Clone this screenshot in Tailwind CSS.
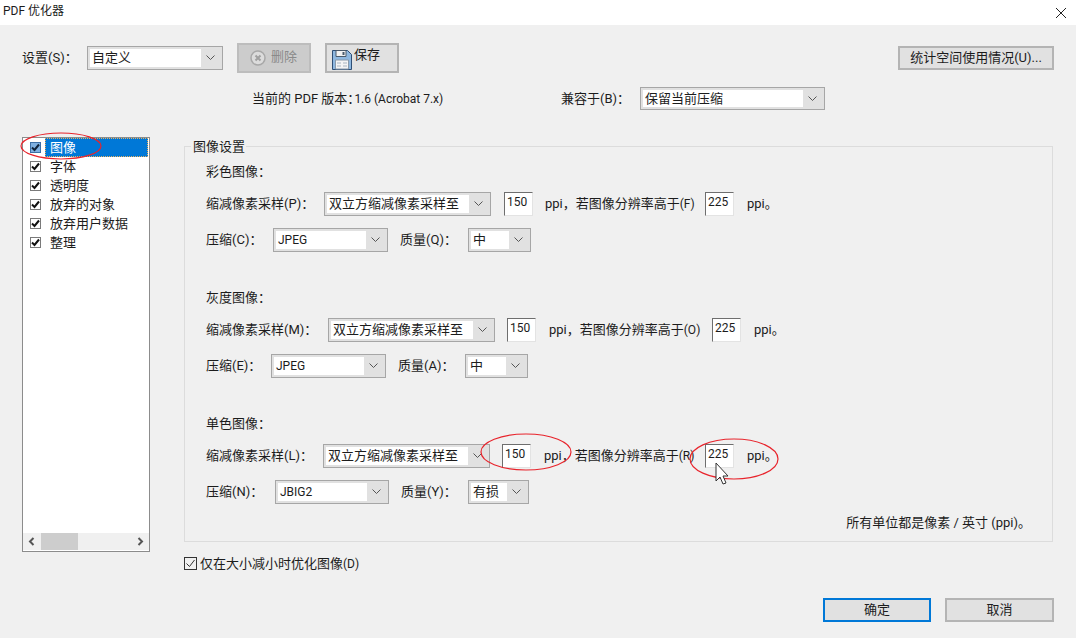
<!DOCTYPE html>
<html>
<head>
<meta charset="UTF-8" />
<title>PDF 优化器</title>
<script src="https://cdn.jsdelivr.net/npm/@tailwindcss/browser@4"></script>
</head>
<body class="relative h-[638px] w-[1076px] overflow-hidden bg-[#f0f0f0] font-['Roboto','Noto_Sans_CJK_SC',sans-serif] text-[13px] leading-5 text-[#1c1c1c]">

<!-- title bar -->
<div class="flex h-[25px] items-center justify-between bg-white pl-[3px] pr-[9px]">
  <span class="-mt-[3px] text-[12px]">PDF 优化器</span>
  <svg width="12" height="12" viewBox="0 0 12 12" fill="none" stroke="#222" stroke-width="1"><path d="M1 1l10 10M11 1L1 11"/></svg>
</div>

<!-- settings row -->
<div class="mt-[18px] flex h-[30px] items-center pl-[22px] pr-[22px]">
  <span class="w-[65px]">设置(S)：</span>
  <div class="flex h-[24px] w-[136px] items-center border border-[#a6a6a6] bg-[#e1e1e1] p-[2px]">
    <div class="h-full flex-1 bg-white pl-[2px] leading-[18px]">自定义</div>
    <svg class="mx-[5px]" width="9" height="6" viewBox="0 0 9 6" fill="none" stroke="#555"><path d="M.5 .5l4 4 4-4"/></svg>
  </div>
  <button class="ml-[14px] flex h-[30px] w-[74px] items-center border-2 border-[#bdbdbd] bg-[#cccccc] pl-[11px] text-[#8a8a8a]">
    <svg width="16" height="16" viewBox="0 0 16 16"><circle cx="8" cy="8" r="7" fill="#dcdcdc" stroke="#a8a8a8" stroke-width="1.5"/><path d="M5.5 5.5l5 5M10.5 5.5l-5 5" stroke="#a0a0a0" stroke-width="2"/></svg>
    <span class="ml-[5px] -mt-[2px]">删除</span>
  </button>
  <button class="ml-[14px] flex h-[30px] w-[74px] items-start border-2 border-[#b4b4b4] bg-[#e1e1e1] pl-[5px]">
    <svg class="mt-[4px]" width="20" height="21" viewBox="0 0 20 21"><path d="M.5 1.5h15l4 4v15H.5z" fill="#8fb8e0" stroke="#2f4f75"/><path d="M4 1.5h10v6H4z" fill="#f2f2f2" stroke="#4a5a6a"/><path d="M10.5 3h2v3h-2z" fill="#4a5a6a"/><path d="M3.5 11h13v9h-13z" fill="#f4f4f4" stroke="#8a9aaa"/><path d="M5 14h4M11 14h4M5 17h4M11 17h4" stroke="#a8b4c0"/></svg>
    <span class="ml-[2px]">保存</span>
  </button>
  <button class="ml-auto h-[24px] w-[156px] border-2 border-[#b4b4b4] bg-[#e1e1e1] leading-[20px]">统计空间使用情况(U)...</button>
</div>

<!-- version row -->
<div class="mt-[14px] flex h-[23px] items-center pl-[252px]">
  <span class="w-[309px]">当前的 PDF 版本：<span class="-ml-[6px] text-[12px]">1.6 (Acrobat 7.x)</span></span>
  <span class="w-[79px]">兼容于(B)：</span>
  <div class="flex h-[23px] w-[185px] items-center border border-[#a6a6a6] bg-[#e1e1e1] p-[2px]">
    <div class="h-full flex-1 bg-white pl-[2px] leading-[17px]">保留当前压缩</div>
    <svg class="mx-[5px]" width="9" height="6" viewBox="0 0 9 6" fill="none" stroke="#555"><path d="M.5 .5l4 4 4-4"/></svg>
  </div>
</div>

<!-- body -->
<div class="mt-[27px] flex items-start pl-[22px]">
  <!-- panel list -->
  <div class="flex h-[415px] w-[128px] flex-col border border-[#8c8c8c] bg-white">
    <div class="flex-1">
      <div class="flex h-[19px] items-center pl-[7px]">
        <span class="flex h-[11px] w-[11px] items-center justify-center border border-[#3d6fa5] bg-[#7fb0e0]"><svg width="9" height="9" viewBox="0 0 9 9" fill="none" stroke="#10233a" stroke-width="2"><path d="M1 4.5l2.5 2.5L8 1.5"/></svg></span>
        <span class="ml-[4px] flex h-[19px] w-[103px] items-center border border-dotted border-[#e8b060] bg-[#0078d7] pl-[4px] text-white">图像</span>
      </div>
      <div class="flex h-[19px] items-center pl-[7px]">
        <span class="flex h-[11px] w-[11px] items-center justify-center border border-[#7a7a7a] bg-white"><svg width="9" height="9" viewBox="0 0 9 9" fill="none" stroke="#111" stroke-width="2"><path d="M1 4.5l2.5 2.5L8 1.5"/></svg></span>
        <span class="ml-[9px]">字体</span>
      </div>
      <div class="flex h-[19px] items-center pl-[7px]">
        <span class="flex h-[11px] w-[11px] items-center justify-center border border-[#7a7a7a] bg-white"><svg width="9" height="9" viewBox="0 0 9 9" fill="none" stroke="#111" stroke-width="2"><path d="M1 4.5l2.5 2.5L8 1.5"/></svg></span>
        <span class="ml-[9px]">透明度</span>
      </div>
      <div class="flex h-[19px] items-center pl-[7px]">
        <span class="flex h-[11px] w-[11px] items-center justify-center border border-[#7a7a7a] bg-white"><svg width="9" height="9" viewBox="0 0 9 9" fill="none" stroke="#111" stroke-width="2"><path d="M1 4.5l2.5 2.5L8 1.5"/></svg></span>
        <span class="ml-[9px]">放弃的对象</span>
      </div>
      <div class="flex h-[19px] items-center pl-[7px]">
        <span class="flex h-[11px] w-[11px] items-center justify-center border border-[#7a7a7a] bg-white"><svg width="9" height="9" viewBox="0 0 9 9" fill="none" stroke="#111" stroke-width="2"><path d="M1 4.5l2.5 2.5L8 1.5"/></svg></span>
        <span class="ml-[9px]">放弃用户数据</span>
      </div>
      <div class="flex h-[19px] items-center pl-[7px]">
        <span class="flex h-[11px] w-[11px] items-center justify-center border border-[#7a7a7a] bg-white"><svg width="9" height="9" viewBox="0 0 9 9" fill="none" stroke="#111" stroke-width="2"><path d="M1 4.5l2.5 2.5L8 1.5"/></svg></span>
        <span class="ml-[9px]">整理</span>
      </div>
    </div>
    <!-- scrollbar -->
    <div class="mb-[1px] flex h-[17px] items-center bg-[#f0f0f0]">
      <svg class="ml-[5px]" width="7" height="9" viewBox="0 0 7 9" fill="none" stroke="#555" stroke-width="2"><path d="M5.5 1L2 4.5 5.5 8"/></svg>
      <div class="ml-[6px] h-full w-[37px] bg-[#cdcdcd]"></div>
      <svg class="ml-auto mr-[5px]" width="7" height="9" viewBox="0 0 7 9" fill="none" stroke="#555" stroke-width="2"><path d="M1.5 1L5 4.5 1.5 8"/></svg>
    </div>
  </div>

  <!-- right column -->
  <div class="ml-[34px] mt-[9px]">
    <div class="relative h-[396px] w-[869px] border border-[#dcdcdc] pl-[21px] pt-[15px]">
      <span class="absolute -top-[10px] left-[6px] bg-[#f0f0f0] pl-[2px] pr-[1px]">图像设置</span>

      <!-- colour -->
      <div class="h-5">彩色图像：</div>
      <div class="mt-[10px] flex h-[24px] items-center">
        <span class="w-[118px]">缩减像素采样(P)：</span>
        <div class="flex h-[24px] w-[167px] items-center border border-[#a6a6a6] bg-[#e1e1e1] p-[2px]"><div class="h-full flex-1 bg-white pl-[2px] leading-[18px]">双立方缩减像素采样至</div><svg class="mx-[5px]" width="9" height="6" viewBox="0 0 9 6" fill="none" stroke="#555"><path d="M.5 .5l4 4 4-4"/></svg></div>
        <div class="ml-[13px] h-[24px] w-[29px] border border-b-[#e3e3e3] border-l-[#6e6e6e] border-r-[#e3e3e3] border-t-[#6e6e6e] bg-white pl-[2px] text-[12px] leading-[19px]">150</div>
        <span class="ml-[12px] w-[160px]">ppi，若图像分辨率高于<span class="text-[12px]">(F)</span></span>
        <div class="h-[24px] w-[29px] border border-b-[#e3e3e3] border-l-[#6e6e6e] border-r-[#e3e3e3] border-t-[#6e6e6e] bg-white pl-[2px] text-[12px] leading-[19px]">225</div>
        <span class="ml-[13px]">ppi。</span>
      </div>
      <div class="mt-[12px] flex h-[24px] items-center">
        <span class="w-[67px]">压缩(C)：</span>
        <div class="flex h-[24px] w-[115px] items-center border border-[#a6a6a6] bg-[#e1e1e1] p-[2px]"><div class="h-full flex-1 bg-white pl-[2px] text-[12px] leading-[18px]">JPEG</div><svg class="mx-[5px]" width="9" height="6" viewBox="0 0 9 6" fill="none" stroke="#555"><path d="M.5 .5l4 4 4-4"/></svg></div>
        <span class="ml-[12px] w-[68px]">质量(Q)：</span>
        <div class="flex h-[24px] w-[63px] items-center border border-[#a6a6a6] bg-[#e1e1e1] p-[2px]"><div class="h-full flex-1 bg-white pl-[2px] leading-[18px]">中</div><svg class="mx-[5px]" width="9" height="6" viewBox="0 0 9 6" fill="none" stroke="#555"><path d="M.5 .5l4 4 4-4"/></svg></div>
      </div>

      <!-- grey -->
      <div class="mt-[36px] h-5">灰度图像：</div>
      <div class="mt-[10px] flex h-[24px] items-center">
        <span class="w-[122px]">缩减像素采样(M)：</span>
        <div class="flex h-[24px] w-[167px] items-center border border-[#a6a6a6] bg-[#e1e1e1] p-[2px]"><div class="h-full flex-1 bg-white pl-[2px] leading-[18px]">双立方缩减像素采样至</div><svg class="mx-[5px]" width="9" height="6" viewBox="0 0 9 6" fill="none" stroke="#555"><path d="M.5 .5l4 4 4-4"/></svg></div>
        <div class="ml-[12px] h-[24px] w-[29px] border border-b-[#e3e3e3] border-l-[#6e6e6e] border-r-[#e3e3e3] border-t-[#6e6e6e] bg-white pl-[2px] text-[12px] leading-[19px]">150</div>
        <span class="ml-[13px] w-[163px]">ppi，若图像分辨率高于<span class="text-[12px]">(O)</span></span>
        <div class="h-[24px] w-[29px] border border-b-[#e3e3e3] border-l-[#6e6e6e] border-r-[#e3e3e3] border-t-[#6e6e6e] bg-white pl-[2px] text-[12px] leading-[19px]">225</div>
        <span class="ml-[13px]">ppi。</span>
      </div>
      <div class="mt-[12px] flex h-[24px] items-center">
        <span class="w-[65px]">压缩(E)：</span>
        <div class="flex h-[24px] w-[115px] items-center border border-[#a6a6a6] bg-[#e1e1e1] p-[2px]"><div class="h-full flex-1 bg-white pl-[2px] text-[12px] leading-[18px]">JPEG</div><svg class="mx-[5px]" width="9" height="6" viewBox="0 0 9 6" fill="none" stroke="#555"><path d="M.5 .5l4 4 4-4"/></svg></div>
        <span class="ml-[12px] w-[67px]">质量(A)：</span>
        <div class="flex h-[24px] w-[63px] items-center border border-[#a6a6a6] bg-[#e1e1e1] p-[2px]"><div class="h-full flex-1 bg-white pl-[2px] leading-[18px]">中</div><svg class="mx-[5px]" width="9" height="6" viewBox="0 0 9 6" fill="none" stroke="#555"><path d="M.5 .5l4 4 4-4"/></svg></div>
      </div>

      <!-- mono -->
      <div class="mt-[36px] h-5">单色图像：</div>
      <div class="mt-[10px] flex h-[24px] items-center">
        <span class="w-[117px]">缩减像素采样(L)：</span>
        <div class="flex h-[24px] w-[167px] items-center border border-[#a6a6a6] bg-[#e1e1e1] p-[2px]"><div class="h-full flex-1 bg-white pl-[2px] leading-[18px]">双立方缩减像素采样至</div><svg class="mx-[5px]" width="9" height="6" viewBox="0 0 9 6" fill="none" stroke="#555"><path d="M.5 .5l4 4 4-4"/></svg></div>
        <div class="ml-[12px] h-[24px] w-[29px] border border-b-[#e3e3e3] border-l-[#6e6e6e] border-r-[#e3e3e3] border-t-[#6e6e6e] bg-white pl-[2px] text-[12px] leading-[19px]">150</div>
        <span class="ml-[13px] w-[161px]">ppi，若图像分辨率高于<span class="text-[12px]">(R)</span></span>
        <div class="h-[24px] w-[29px] border border-b-[#e3e3e3] border-l-[#6e6e6e] border-r-[#e3e3e3] border-t-[#6e6e6e] bg-white pl-[2px] text-[12px] leading-[19px]">225</div>
        <span class="ml-[13px]">ppi。</span>
      </div>
      <div class="mt-[12px] flex h-[24px] items-center">
        <span class="w-[69px]">压缩(N)：</span>
        <div class="flex h-[24px] w-[114px] items-center border border-[#a6a6a6] bg-[#e1e1e1] p-[2px]"><div class="h-full flex-1 bg-white pl-[2px] text-[12px] leading-[18px]">JBIG2</div><svg class="mx-[5px]" width="9" height="6" viewBox="0 0 9 6" fill="none" stroke="#555"><path d="M.5 .5l4 4 4-4"/></svg></div>
        <span class="ml-[12px] w-[67px]">质量(Y)：</span>
        <div class="flex h-[24px] w-[61px] items-center border border-[#a6a6a6] bg-[#e1e1e1] p-[2px]"><div class="h-full flex-1 bg-white pl-[2px] leading-[18px]">有损</div><svg class="mx-[5px]" width="9" height="6" viewBox="0 0 9 6" fill="none" stroke="#555"><path d="M.5 .5l4 4 4-4"/></svg></div>
      </div>

      <div class="mt-[9px] pr-[21px] text-right">所有单位都是像素 / 英寸 (ppi)。</div>
    </div>

    <div class="mt-[15px] flex h-[13px] items-center">
      <span class="flex h-[13px] w-[13px] items-center justify-center border border-[#333] bg-transparent"><svg width="11" height="11" viewBox="0 0 11 11" fill="none" stroke="#333"><path d="M1.5 5.5l3 3 5-6.5"/></svg></span>
      <span class="ml-[3px]">仅在大小减小时优化图像<span class="text-[12px]">(D)</span></span>
    </div>
  </div>
</div>

<!-- footer buttons -->
<div class="mt-[28px] flex justify-end gap-[14px] pr-[22px]">
  <button class="h-[24px] w-[108px] border-2 border-[#0078d7] bg-[#e1e1e1] leading-[20px]">确定</button>
  <button class="h-[24px] w-[109px] border-2 border-[#b4b4b4] bg-[#e1e1e1] leading-[20px]">取消</button>
</div>

<!-- red annotations and mouse pointer drawn over the dialog -->
<svg class="pointer-events-none absolute left-0 top-0" width="1076" height="638" fill="none" stroke="#e8242c" stroke-width="1.2">
  <ellipse cx="61" cy="146" rx="40" ry="13"/>
  <ellipse cx="526" cy="452" rx="45" ry="18"/>
  <ellipse cx="734" cy="459" rx="44" ry="20"/>
  <path d="M716 463v18l4-4 3 7 3-1-3-7h5z" fill="#fff" stroke="#333" stroke-width="1"/>
</svg>
</body>
</html>
